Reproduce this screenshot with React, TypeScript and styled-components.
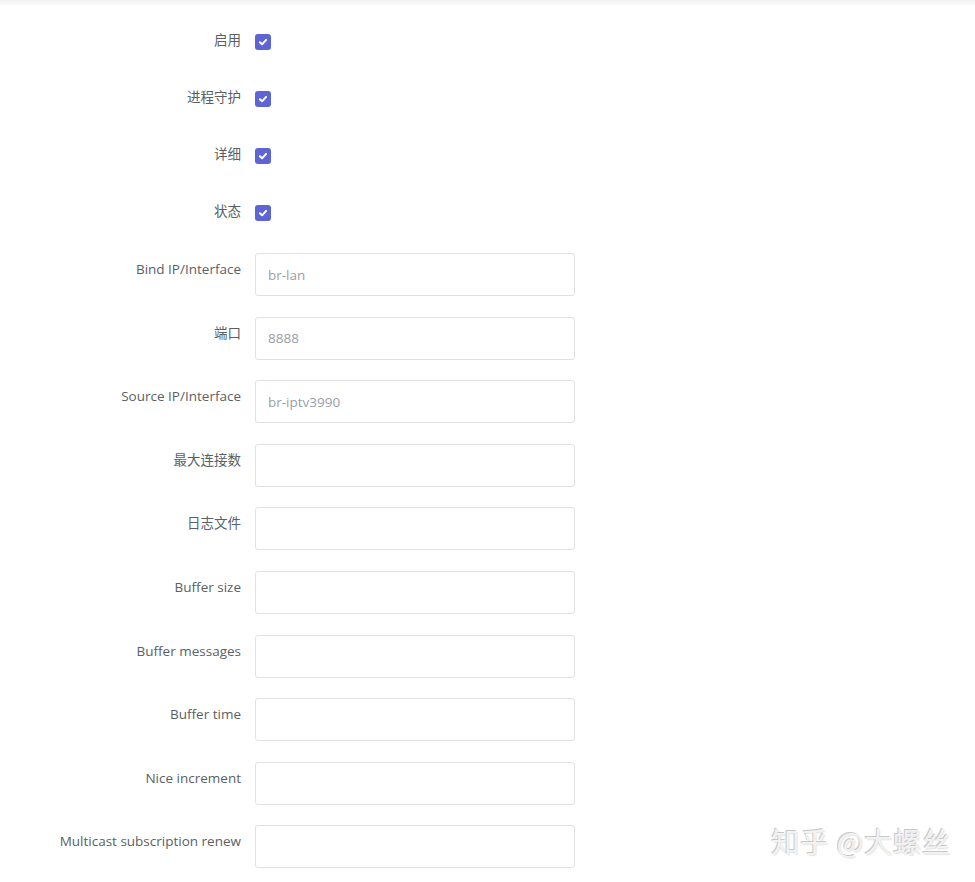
import styled, { createGlobalStyle } from 'styled-components'

const GlobalStyle = createGlobalStyle`
  html, body {
    margin: 0;
    padding: 0;
    background: #fff;
  }
  body {
    font-family: "Open Sans", "Noto Sans CJK SC", sans-serif;
    color: #525f7f;
  }
`

type Field = {label: string; placeholder?: string}

const toggles = ['启用', '进程守护', '详细', '状态']

const fields: Field[] = [
  {label: 'Bind IP/Interface', placeholder: 'br-lan'},
  {label: '端口', placeholder: '8888'},
  {label: 'Source IP/Interface', placeholder: 'br-iptv3990'},
  {label: '最大连接数'},
  {label: '日志文件'},
  {label: 'Buffer size'},
  {label: 'Buffer messages'},
  {label: 'Buffer time'},
  {label: 'Nice increment'},
  {label: 'Multicast subscription renew'},
]

export default function App() {
  return (
    <Page>
      <GlobalStyle />
      <TopShade />
      <Form>
        {toggles.map(t => (
          <CheckRow key={t}>
            <Label $inline>{t}</Label>
            <Check>
              <svg width="10" height="10" viewBox="0 0 10 10">
                <path d="M1.9 5.2 L4.1 7.3 L8.1 2.9" fill="none" stroke="#fff" strokeWidth="2" strokeLinecap="round" strokeLinejoin="round" />
              </svg>
            </Check>
          </CheckRow>
        ))}
        <Inputs>
          {fields.map(f => (
            <InputRow key={f.label}>
              <Label>{f.label}</Label>
              <TextInput placeholder={f.placeholder} />
            </InputRow>
          ))}
        </Inputs>
      </Form>
      <Watermark>知乎 @大螺丝</Watermark>
    </Page>
  )
}

const Page = styled.div`
  position: relative;
  width: 975px;
  height: 882px;
  overflow: hidden;
  background: #fff;
`

const TopShade = styled.div`
  height: 5px;
  background: linear-gradient(#f1f2f4, #fafafb);
`

const Form = styled.div`
  padding-top: 8px;
`

const CheckRow = styled.div`
  display: grid;
  grid-template-columns: 241px auto;
  column-gap: 14px;
  align-items: center;
  height: 57px;
`

const Label = styled.div<{$inline?: boolean}>`
  text-align: right;
  font-size: 13.5px;
  line-height: 19px;
  color: #5a5f66;
  align-self: ${p => (p.$inline ? 'center' : 'start')};
  padding-top: ${p => (p.$inline ? '0' : '7px')};
  margin-top: ${p => (p.$inline ? '-3px' : '0')};
`

const Check = styled.span`
  width: 16px;
  height: 16px;
  border-radius: 3px;
  background: #5d64d4;
  display: flex;
  align-items: center;
  justify-content: center;
`

const Inputs = styled.div`
  display: flex;
  flex-direction: column;
  gap: 20.6px;
  padding-top: 12px;
`

const InputRow = styled.div`
  display: grid;
  grid-template-columns: 241px 320px;
  column-gap: 14px;
`

const TextInput = styled.input`
  box-sizing: border-box;
  height: 43px;
  width: 320px;
  border: 1px solid #dfe1e5;
  border-radius: 3px;
  padding: 0 12px;
  font-family: "Open Sans", sans-serif;
  font-size: 13.5px;
  color: #555;
  outline: none;
  &::placeholder {
    color: #9a9ea5;
  }
`

const Watermark = styled.div`
  position: absolute;
  right: 24px;
  bottom: 21px;
  font-family: "Noto Sans CJK SC", sans-serif;
  font-size: 28px;
  letter-spacing: 1px;
  color: #f2f2f2;
  text-shadow: -1px -1px 0 #c8c8c8, 1px 1px 1px #e6e6e6;
`
